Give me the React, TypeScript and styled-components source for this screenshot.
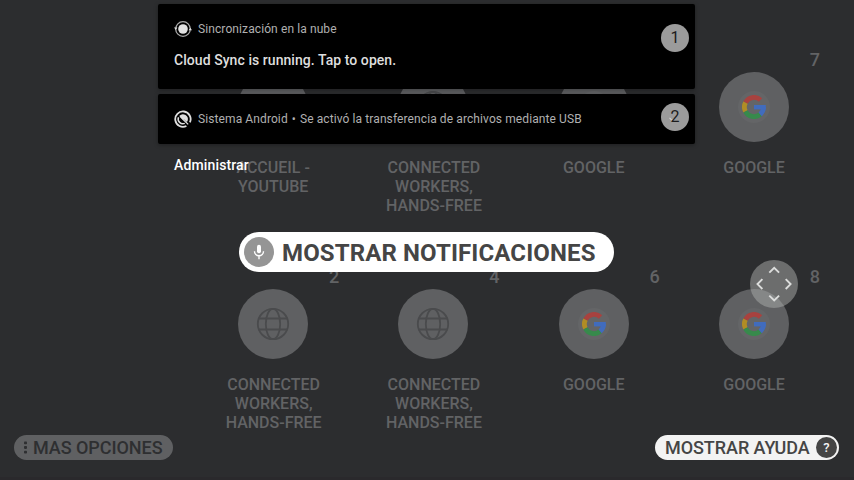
import React from 'react';
import styled, { createGlobalStyle } from 'styled-components';

const GlobalStyle = createGlobalStyle`
  * { box-sizing: border-box; }
  body { margin: 0; background: #2c2d2f; font-family: Roboto, "Liberation Sans", sans-serif; }
`;

const Screen = styled.main`
  position: relative;
  width: 854px;
  height: 480px;
  overflow: hidden;
  background: #2c2d2f;
  border-bottom: 3px solid #2a292c;
  display: flex;
  flex-direction: column;
  justify-content: space-between;
`;

const AppGrid = styled.section`
  display: grid;
  grid-template-columns: repeat(4, 160.3px);
  grid-auto-rows: 217px;
  padding-left: 193px;
  height: 434px;
`;

const Tile = styled.article`
  position: relative;
  padding-top: 72px;
  display: flex;
  flex-direction: column;
  align-items: center;
`;

const TileNumber = styled.span`
  position: absolute;
  top: 49px;
  left: 131px;
  width: 20px;
  text-align: center;
  font-size: 18px;
  line-height: 21px;
  font-weight: 500;
  color: #626365;
`;

const Disc = styled.div`
  width: 70px;
  height: 70px;
  border-radius: 50%;
  background: #5f6062;
  display: flex;
  align-items: center;
  justify-content: center;
`;

const LogoPlate = styled.div`
  width: 32px;
  height: 32px;
  border-radius: 50%;
  background: #646567;
  display: flex;
  align-items: center;
  justify-content: center;
`;

const TileLabel = styled.div<{ $wide: boolean }>`
  margin-top: 16px;
  width: 112px;
  padding-left: ${(p) => (p.$wide ? 1 : 0)}px;
  text-align: center;
  font-size: 16px;
  line-height: 19px;
  font-weight: 500;
  color: #626365;
  white-space: pre-line;
`;

const Footer = styled.footer`
  display: flex;
  justify-content: space-between;
  padding: 0 15px 17px 14px;
`;

const FooterButton = styled.button<{ $dim?: boolean }>`
  display: flex;
  align-items: center;
  height: 25px;
  width: ${(p) => (p.$dim ? 159 : 184)}px;
  padding: ${(p) => (p.$dim ? '0 0 0 8px' : '0 2px 0 10px')};
  gap: 4px;
  justify-content: ${(p) => (p.$dim ? 'flex-start' : 'space-between')};
  border: 0;
  border-radius: 13px;
  background: ${(p) => (p.$dim ? '#5f6062' : '#f3f3f3')};
  color: ${(p) => (p.$dim ? '#2e2f31' : '#454545')};
  font: 500 18px/25px Roboto, sans-serif;
  letter-spacing: -0.06px;
  white-space: nowrap;
`;

const HelpBadge = styled.span`
  width: 21px;
  height: 21px;
  border-radius: 50%;
  background: #454545;
  color: #f3f3f3;
  font-size: 13px;
  line-height: 21px;
  text-align: center;
`;

const Shade = styled.aside`
  position: absolute;
  top: 4px;
  left: 158px;
  width: 537px;
  display: flex;
  flex-direction: column;
  gap: 5px;
`;

const Notification = styled.div<{ $tall?: boolean }>`
  height: ${(p) => (p.$tall ? 85 : 50)}px;
  padding: 16px 6px 0 16px;
  background: #000;
  border-radius: 2px;
  box-shadow: 0 1px 4px rgba(0, 0, 0, 0.35);
  display: flex;
  justify-content: space-between;
`;

const NotificationText = styled.div`
  display: flex;
  flex-direction: column;
  gap: 14px;
`;

const NotificationHeader = styled.div`
  display: flex;
  align-items: center;
  gap: 6px;
  height: 18px;
  font-size: 12px;
  line-height: 18px;
  letter-spacing: 0.1px;
  color: #b0b0b0;
  white-space: pre;
`;

const HeaderWords = styled.span`
  display: flex;
  gap: 4px;
`;

const NotificationTitle = styled.div`
  font-size: 14px;
  line-height: 16px;
  font-weight: 500;
  letter-spacing: 0.06px;
  color: #dedede;
`;

const IndexBadge = styled.span<{ $shift: number }>`
  width: 28px;
  height: 28px;
  margin-top: ${(p) => p.$shift}px;
  border-radius: 50%;
  background: #9b9b9b;
  color: #1c1c1c;
  font-size: 16px;
  line-height: 27px;
  text-align: center;
`;

const ExpandableBadge = styled(IndexBadge)`
  position: relative;
  z-index: 0;
`;

const ChevronMark = styled.svg`
  position: absolute;
  z-index: -1;
  left: 8px;
  top: 14px;
`;

const Manage = styled.div`
  padding: 8px 0 0 16px;
  font-size: 14px;
  line-height: 16px;
  font-weight: 500;
  letter-spacing: 0.14px;
  color: #fff;
`;

const VoicePill = styled.div`
  position: absolute;
  left: 239px;
  top: 232px;
  width: 375px;
  height: 40px;
  padding-left: 5px;
  display: flex;
  align-items: center;
  gap: 8px;
  border-radius: 20px;
  background: #fff;
  color: #454545;
  font-size: 24px;
  font-weight: 700;
  line-height: 40px;
  letter-spacing: 0.12px;
  white-space: nowrap;
`;

const MicDisc = styled.span`
  width: 30px;
  height: 30px;
  flex: none;
  border-radius: 50%;
  background: #959595;
  display: flex;
  align-items: center;
  justify-content: center;
`;

const PillText = styled.span`
  padding-top: 2px;
`;

const DirectionPad = styled.div`
  position: absolute;
  left: 750px;
  top: 260px;
  width: 48px;
  height: 48px;
  border-radius: 50%;
  background: rgba(172, 174, 172, 0.5);
`;

const GoogleLogo = () => (
  <svg width="24" height="24" viewBox="0 0 24 24" fill="none" strokeWidth="4.8">
    <path stroke="#a8423f" d="M18.55 4.98A9.6 9.6 0 0 0 3.45 7.64" />
    <path stroke="#b08d25" d="M3.45 7.64a9.6 9.6 0 0 0 0 8.72" />
    <path stroke="#378a4c" d="M3.45 16.36a9.6 9.6 0 0 0 14.72 2.99" />
    <path stroke="#416cbd" d="M18.17 19.35A9.6 9.6 0 0 0 21.5 12" />
    <path fill="#416cbd" d="M12 10h11.8v4.4H12z" />
  </svg>
);

const GlobeIcon = () => (
  <svg width="34" height="34" viewBox="0 0 34 34" fill="none" stroke="#4a4b4d" strokeWidth="1.8">
    <circle cx="17" cy="17" r="15.2" />
    <ellipse cx="17" cy="17" rx="7.2" ry="15.2" />
    <path d="M2.8 11.5h28.4M2.8 22.5h28.4" />
  </svg>
);

const SyncIcon = () => (
  <svg width="18" height="18" viewBox="0 0 18 18" fill="none" stroke="#a8a8a8" strokeWidth="1.3">
    <circle cx="9" cy="9" r="4.8" fill="#e2e2e2" stroke="none" />
    <circle cx="9" cy="9" r="7.3" />
    <path d="M0 7.6h3.4L1.8 10zM14.6 10.2H18l-1.7-2.4z" fill="#dcdcdc" stroke="none" />
  </svg>
);

const SystemIcon = () => (
  <svg width="18" height="18" viewBox="0 0 18 18" fill="none" stroke="#dedede" strokeWidth="1.8">
    <path d="M12.4 16A7.7 7.7 0 1 1 15.9 12.4" />
    <path d="M10.8 13.4A4.8 4.8 0 0 1 4.5 7.2" strokeWidth="1.5" />
    <path d="M5.4 5.7A5 5 0 0 1 13.6 10.9l-.8 1.1-3-2.8-1.6.2-2.2-2.1z" fill="#dedede" stroke="none" />
    <path d="M8.6 9l5.6 5.4" strokeWidth="1.3" />
  </svg>
);

const MicIcon = () => (
  <svg width="12" height="16" viewBox="0 0 12 16" fill="none" stroke="#fff" strokeWidth="1.4">
    <rect x="4" y="0.7" width="4" height="8.6" rx="2" fill="#fff" stroke="none" />
    <path d="M1.5 7.3a4.5 4.5 0 0 0 9 0M6 11.8v3.5" />
  </svg>
);

const DotsIcon = () => (
  <svg width="7" height="13" viewBox="0 0 7 13" fill="#2e2f31">
    <rect x="2" y="0.5" width="3" height="2.8" rx=".8" />
    <rect x="2" y="5.1" width="3" height="2.8" rx=".8" />
    <rect x="2" y="9.7" width="3" height="2.8" rx=".8" />
  </svg>
);

const PadArrows = () => (
  <svg width="48" height="48" viewBox="0 0 48 48" fill="none" stroke="#dcdddc" strokeWidth="1.9">
    <path d="M19.3 12.7l4.9-4.9 4.9 4.9M19.3 35.6l4.9 4.9 4.9-4.9M12.4 19.2l-4.9 4.9 4.9 4.9M35.7 19.2l4.9 4.9-4.9 4.9" />
  </svg>
);

type AppEntry = { id: number; label: string; kind: 'plain' | 'web' | 'google' };

const workers = 'CONNECTED\nWORKERS,\nHANDS-FREE';
const apps: AppEntry[] = [
  { id: 1, label: 'ACCUEIL -\nYOUTUBE', kind: 'plain' },
  { id: 3, label: workers, kind: 'web' },
  { id: 5, label: 'GOOGLE', kind: 'google' },
  { id: 7, label: 'GOOGLE', kind: 'google' },
  { id: 2, label: workers, kind: 'web' },
  { id: 4, label: workers, kind: 'web' },
  { id: 6, label: 'GOOGLE', kind: 'google' },
  { id: 8, label: 'GOOGLE', kind: 'google' },
];

export default function App() {
  return (
    <>
      <GlobalStyle />
      <Screen>
        <AppGrid>
          {apps.map((app) => (
            <Tile key={app.id}>
              {/* The notification shade hides the numbers of the first three top tiles. */}
              {![1, 3, 5].includes(app.id) && <TileNumber>{app.id}</TileNumber>}
              <Disc>
                {app.kind === 'google' && <LogoPlate><GoogleLogo /></LogoPlate>}
                {app.kind === 'web' && <GlobeIcon />}
              </Disc>
              <TileLabel $wide={app.kind === 'web'}>{app.label}</TileLabel>
            </Tile>
          ))}
        </AppGrid>
        <Footer>
          <FooterButton $dim><DotsIcon />MAS OPCIONES</FooterButton>
          <FooterButton>MOSTRAR AYUDA<HelpBadge>?</HelpBadge></FooterButton>
        </Footer>
        <Shade>
          <Notification $tall>
            <NotificationText>
              <NotificationHeader><SyncIcon />Sincronización en la nube</NotificationHeader>
              <NotificationTitle>Cloud Sync is running. Tap to open.</NotificationTitle>
            </NotificationText>
            <IndexBadge $shift={4}>1</IndexBadge>
          </Notification>
          <Notification>
            <NotificationHeader>
              <SystemIcon />
              <HeaderWords>
                <span>Sistema Android</span>
                <span>•</span>
                <span>Se activó la transferencia de archivos mediante USB</span>
              </HeaderWords>
            </NotificationHeader>
            <ExpandableBadge $shift={-7}>
              <ChevronMark width="6" height="5" viewBox="0 0 6 5" fill="none" stroke="#d0d0d0" strokeWidth="1.2">
                <path d="M0.5 0.8l2.6 2.6L4.6 2" />
              </ChevronMark>
              2
            </ExpandableBadge>
          </Notification>
          <Manage>Administrar</Manage>
        </Shade>
        <VoicePill>
          <MicDisc><MicIcon /></MicDisc>
          <PillText>MOSTRAR NOTIFICACIONES</PillText>
        </VoicePill>
        <DirectionPad><PadArrows /></DirectionPad>
      </Screen>
    </>
  );
}
